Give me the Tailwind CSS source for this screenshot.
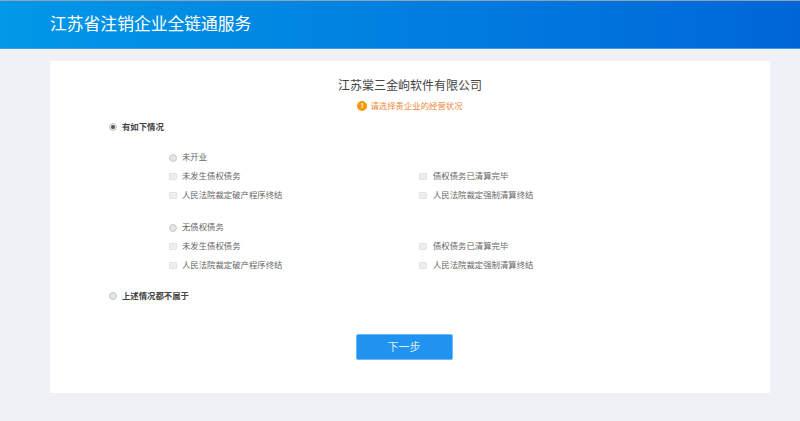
<!DOCTYPE html>
<html lang="zh"><head><meta charset="utf-8"><script src="https://cdn.jsdelivr.net/npm/@tailwindcss/browser@4"></script></head>
<body class="m-0 h-[421px] w-[800px] overflow-hidden bg-[#f0f1f6] font-['Liberation_Sans','Noto_Sans_CJK_SC',sans-serif]">
<header class="h-[49px] border-t border-b border-t-[#8fa3b8] border-b-[#3f9bea] bg-gradient-to-r from-[#0398e8] to-[#0066d8] pl-[50px]">
  <h1 class="text-[16.8px] leading-[47px] font-normal text-white">江苏省注销企业全链通服务</h1>
</header>
<main class="ml-[50px] mt-[12px] h-[332px] w-[720px] bg-white pt-[16px]">
  <div class="text-center text-[12px] leading-[18px] text-[#444]">江苏棠三金岣软件有限公司</div>
  <div class="mt-[1px] flex h-[20px] items-center justify-center gap-[3px] text-[8.4px] text-[#f0883a]">
    <span class="flex h-[10px] w-[10px] items-center justify-center rounded-full bg-[#f59a0c] text-[8px] font-bold leading-none text-white">!</span>
    <span>请选择贵企业的经营状况</span>
  </div>
  <div class="mt-[1px] flex h-[20px] items-center pl-[59px] text-[8.4px] font-bold text-[#444]">
    <span class="mr-[5px] flex h-[8px] w-[8px] items-center justify-center rounded-full border border-[#c4c4c4] bg-[#e8e8e8]"><span class="h-[4px] w-[4px] rounded-full bg-[#555]"></span></span>
    <span>有如下情况</span>
  </div>
  <section class="mt-[11px] flex flex-col pl-[119px] text-[8.4px] text-[#666]">
    <div class="flex h-[19px] items-center"><span class="mr-[5px] h-[8px] w-[8px] rounded-full border border-[#c8c8c8] bg-[#e4e4e4]"></span><span>未开业</span></div>
    <div class="grid h-[19px] grid-cols-[250px_1fr] items-center">
      <div class="flex items-center"><span class="mr-[5px] h-[7px] w-[8px] rounded-[1px] border border-[#e2e2e2] bg-[#eeeeee]"></span><span>未发生债权债务</span></div>
      <div class="flex items-center"><span class="mr-[6px] h-[7px] w-[8px] rounded-[1px] border border-[#e2e2e2] bg-[#eeeeee]"></span><span>债权债务已清算完毕</span></div>
    </div>
    <div class="grid h-[19px] grid-cols-[250px_1fr] items-center">
      <div class="flex items-center"><span class="mr-[5px] h-[7px] w-[8px] rounded-[1px] border border-[#e2e2e2] bg-[#eeeeee]"></span><span>人民法院裁定破产程序终结</span></div>
      <div class="flex items-center"><span class="mr-[6px] h-[7px] w-[8px] rounded-[1px] border border-[#e2e2e2] bg-[#eeeeee]"></span><span>人民法院裁定强制清算终结</span></div>
    </div>
    <div class="mt-[13px] flex h-[19px] items-center"><span class="mr-[5px] h-[8px] w-[8px] rounded-full border border-[#c8c8c8] bg-[#e4e4e4]"></span><span>无债权债务</span></div>
    <div class="grid h-[19px] grid-cols-[250px_1fr] items-center">
      <div class="flex items-center"><span class="mr-[5px] h-[7px] w-[8px] rounded-[1px] border border-[#e2e2e2] bg-[#eeeeee]"></span><span>未发生债权债务</span></div>
      <div class="flex items-center"><span class="mr-[6px] h-[7px] w-[8px] rounded-[1px] border border-[#e2e2e2] bg-[#eeeeee]"></span><span>债权债务已清算完毕</span></div>
    </div>
    <div class="grid h-[19px] grid-cols-[250px_1fr] items-center">
      <div class="flex items-center"><span class="mr-[5px] h-[7px] w-[8px] rounded-[1px] border border-[#e2e2e2] bg-[#eeeeee]"></span><span>人民法院裁定破产程序终结</span></div>
      <div class="flex items-center"><span class="mr-[6px] h-[7px] w-[8px] rounded-[1px] border border-[#e2e2e2] bg-[#eeeeee]"></span><span>人民法院裁定强制清算终结</span></div>
    </div>
  </section>
  <div class="mt-[11px] flex h-[20px] items-center pl-[59px] text-[8.4px] font-bold text-[#444]">
    <span class="mr-[5px] h-[8px] w-[8px] rounded-full border border-[#c8c8c8] bg-[#e4e4e4]"></span>
    <span>上述情况都不属于</span>
  </div>
  <div class="mt-[28px] flex justify-center">
    <button class="mr-[12px] h-[26px] w-[97px] rounded-[2px] border border-[#6db8f5] bg-[#1f93ef] text-[11px] text-white/85">下一步</button>
  </div>
</main>
</body></html>
